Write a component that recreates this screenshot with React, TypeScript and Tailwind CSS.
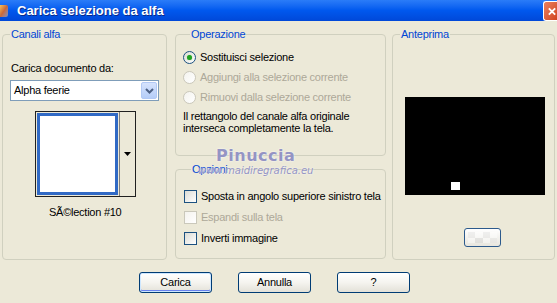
import React from "react";

const font = "font-['Liberation_Sans',Arial,sans-serif]";

const Radio = ({ checked, disabled, label }: { checked?: boolean; disabled?: boolean; label: string }) => (
  <div className="flex h-[20px] items-center">
    <span
      className={`flex size-[13px] items-center justify-center rounded-full border bg-gradient-to-br from-[#dcdcd5] to-white ${
        disabled ? "border-[#cac8bb] from-[#f4f3ee]" : "border-[#1c5180]"
      }`}
    >
      {checked && <span className="size-[5px] rounded-full bg-[#21a121] shadow-[0_0_1px_#6bd36b]" />}
    </span>
    <span className={`ml-[4px] whitespace-nowrap ${disabled ? "text-[#aca899]" : "text-black"}`}>{label}</span>
  </div>
);

const Check = ({ disabled, label }: { disabled?: boolean; label: string }) => (
  <div className="flex h-[21px] items-center">
    <span
      className={`size-[13px] shrink-0 border bg-gradient-to-br from-[#dcdcd5] to-white ${
        disabled ? "border-[#cac8bb] from-[#f4f3ee]" : "border-[#1c5180]"
      }`}
    />
    <span className={`ml-[4px] whitespace-nowrap ${disabled ? "text-[#aca899]" : "text-black"}`}>{label}</span>
  </div>
);

const Group = ({ title, className, children }: { title: string; className?: string; children?: React.ReactNode }) => (
  <fieldset className={`min-w-0 rounded-[4px] border border-[#d0d0bf] ${className ?? ""}`}>
    <legend className="ml-[7px] px-[1px] leading-[13px] text-[#0046d5]">{title}</legend>
    {children}
  </fieldset>
);

const Button = ({ label, primary }: { label: string; primary?: boolean }) => (
  <button
    type="button"
    className={`flex h-[21px] w-[73px] items-center justify-center rounded-[3px] border border-[#003c74] bg-gradient-to-b from-white via-[#f5f4ef] to-[#e3e1d8] text-black ${
      primary ? "shadow-[inset_0_0_0_1px_#cee7ff,inset_0_-1px_0_1px_#6982ee]" : ""
    }`}
  >
    {label}
  </button>
);

export default function App() {
  return (
    <div className={`relative flex h-[303px] w-[557px] flex-col overflow-hidden bg-[#ece9d8] text-[11px] leading-[13px] tracking-[-0.25px] ${font}`}>
      {/* title bar */}
      <div className="flex h-[21px] items-center bg-gradient-to-b from-[#2a7cf8] via-[#0058ee] to-[#0048d8]">
        <span className="ml-0 mr-[9px] h-[12px] w-[8px] rounded-r-[2px] bg-gradient-to-br from-[#f6c05a] via-[#c8683a] to-[#6a8cc8]" />
        <span className="text-[13px] font-bold tracking-normal text-white [text-shadow:1px_1px_#0a2a8a]">Carica selezione da alfa</span>
        <span className="ml-auto mt-[1px] flex h-[20px] w-[14px] items-center justify-center rounded-l-[3px] border border-r-0 border-white bg-gradient-to-br from-[#e9805f] to-[#d2431c]">
          <svg width="11" height="11" viewBox="0 0 11 11" className="ml-[3px]">
            <path d="M2 2 L9 9 M9 2 L2 9" stroke="white" strokeWidth="2" />
          </svg>
        </span>
      </div>

      {/* groups */}
      <div className="flex gap-[8px] px-[2px] pt-[7px]">
        <Group title="Canali alfa" className="h-[232px] w-[165px]">
          <div className="flex flex-col">
            <span className="ml-[8px] mt-[21px]">Carica documento da:</span>
            <div className="ml-[7px] mt-[5px] flex h-[21px] w-[149px] items-center border border-[#7f9db9] bg-white">
              <span className="ml-[3px] flex-1">Alpha feerie</span>
              <span className="mr-[1px] flex h-[17px] w-[16px] items-center justify-center rounded-[2px] border border-[#b2c9f5] bg-gradient-to-b from-[#d6e3fd] to-[#b5cdf8]">
                <svg width="9" height="6" viewBox="0 0 9 6">
                  <path d="M1 1 L4.5 4.5 L8 1" stroke="#4d6185" strokeWidth="2" fill="none" />
                </svg>
              </span>
            </div>
            <div className="ml-[32px] mt-[10px] flex h-[86px] w-[101px] border border-[#202020] bg-[#ece9d8]">
              <div className="m-[1px] w-[81px] border-[3px] border-[#316ac5] bg-white" />
              <div className="flex flex-1 items-center justify-center border-l border-[#808080]">
                <svg width="7" height="4" viewBox="0 0 7 4">
                  <path d="M0 0 H7 L3.5 4 Z" fill="black" />
                </svg>
              </div>
            </div>
            <span className="ml-[46px] mt-[9px]">SÃ©lection #10</span>
          </div>
        </Group>

        <div className="flex w-[211px] flex-col">
          <Group title="Operazione" className="h-[128px] pl-[7px]">
            <div className="mt-[6px]">
              <Radio checked label="Sostituisci selezione" />
              <Radio disabled label="Aggiungi alla selezione corrente" />
              <Radio disabled label="Rimuovi dalla selezione corrente" />
            </div>
            <p className="mt-[3px] leading-[12px]">
              Il rettangolo del canale alfa originale
              <br />
              interseca completamente la tela.
            </p>
          </Group>
          <Group title="Opzioni" className="mt-[7px] h-[96px] pl-[8px]">
            <div className="mt-[10px]">
              <Check label="Sposta in angolo superiore sinistro tela" />
              <Check disabled label="Espandi sulla tela" />
              <Check label="Inverti immagine" />
            </div>
          </Group>
        </div>

        <Group title="Anteprima" className="ml-[-2px] h-[232px] w-[163px]">
          <div className="flex flex-col">
            <div className="relative ml-[12px] mt-[56px] h-[98px] w-[140px] bg-black">
              <span className="absolute left-[46px] top-[85px] h-[8px] w-[9px] bg-white" />
            </div>
            <div className="ml-[71px] mt-[33px] h-[19px] w-[37px] rounded-[3px] border border-[#2c5a8c] bg-gradient-to-b from-white to-[#e8e6de] p-[3px]">
              <div className="grid h-full w-full grid-cols-4 grid-rows-2 opacity-40">
                <span className="bg-[#e0e0e0]" />
                <span className="bg-white" />
                <span className="bg-[#e0e0e0]" />
                <span className="bg-white" />
                <span className="bg-white" />
                <span className="bg-[#d0d0d0]" />
                <span className="bg-white" />
                <span className="bg-[#e0e0e0]" />
              </div>
            </div>
          </div>
        </Group>
      </div>

      {/* buttons */}
      <div className="mt-[12px] flex gap-[26px] pl-[139px]">
        <Button primary label="Carica" />
        <Button label="Annulla" />
        <Button label="?" />
      </div>

      {/* watermark */}
      <div className="pointer-events-none absolute left-[198px] top-[146px] flex flex-col items-center text-[#9494c4] tracking-normal">
        <span className="font-['DejaVu_Sans',sans-serif] text-[16px] font-bold leading-[19px] tracking-[0.5px] [text-shadow:0_0_2px_white]">
          Pinuccia
        </span>
        <span className="font-['DejaVu_Sans',sans-serif] text-[10px] italic leading-[12px] [text-shadow:0_0_2px_white]">
          www.maidiregrafica.eu
        </span>
      </div>
    </div>
  );
}
